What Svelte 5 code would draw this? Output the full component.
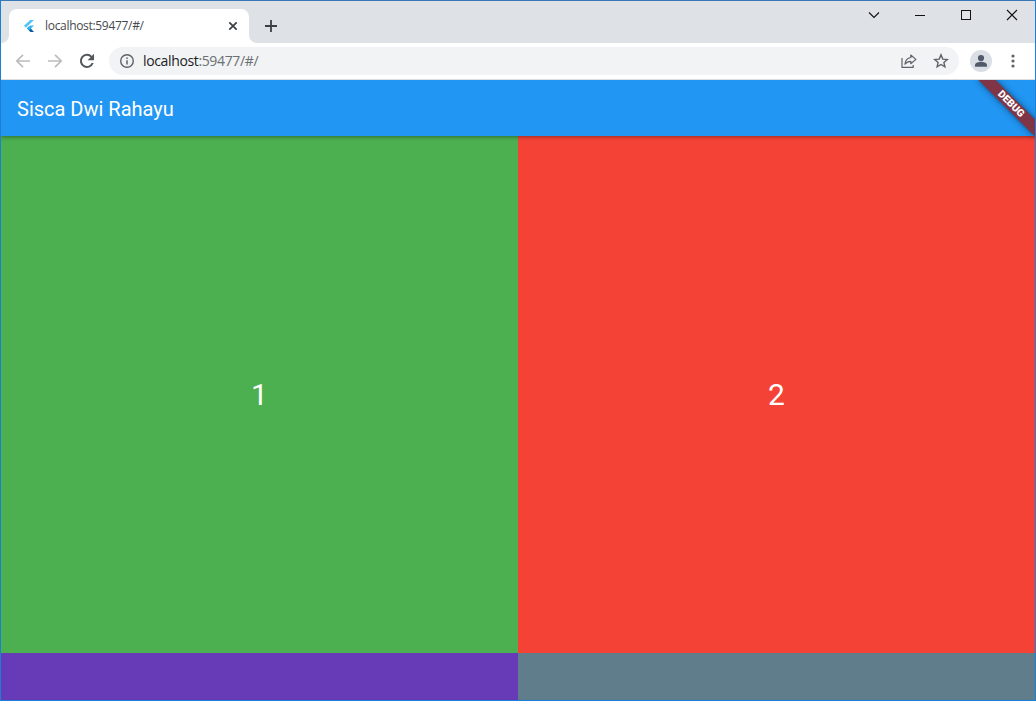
<script>
  const tiles = [
    { label: '1', tone: 'green' },
    { label: '2', tone: 'red' },
    { label: '', tone: 'purple' },
    { label: '', tone: 'slate' }
  ];
</script>

<div class="window">
  <header class="tabs">
    <div class="tab">
      <svg class="logo" width="12" height="14" viewBox="0 0 12 14">
        <path d="M7.2 1H11L2.9 8.7 1 6.8z" fill="#54c5f8" />
        <path d="M7.2 6.5H11L8 9.5 5.9 9.5 4.1 9.5z" fill="#40b8f0" />
        <path d="M4.1 9.5L6 7.6 11 13H7.4z" fill="#075b9d" />
        <path d="M4.1 9.5L6 7.6 8 9.5 6 11.5z" fill="#29b6f6" />
      </svg>
      <span class="tab-title">localhost:59477/#/</span>
      <svg class="close-tab" width="16" height="16" viewBox="0 0 16 16">
        <path d="M4.3 4.3l7.4 7.4M11.7 4.3l-7.4 7.4" stroke="#3c4043" stroke-width="1.7" />
      </svg>
    </div>
    <svg class="plus" width="16" height="16" viewBox="0 0 16 16">
      <path d="M8 2v12M2 8h12" stroke="#3c4043" stroke-width="1.8" />
    </svg>
    <div class="controls">
      <svg width="46" height="28" viewBox="0 0 46 28"><path d="M18 11.5l5 5 5-5" /></svg>
      <svg width="46" height="28" viewBox="0 0 46 28"><path d="M18 14.5h10" shape-rendering="crispEdges" /></svg>
      <svg width="46" height="28" viewBox="0 0 46 28"><path d="M18.5 9.5h9v9h-9z" shape-rendering="crispEdges" /></svg>
      <svg width="46" height="28" viewBox="0 0 46 28"><path d="M18 9l10 10M28 9L18 19" /></svg>
    </div>
  </header>

  <nav class="toolbar">
    <svg class="nav" width="16" height="16" viewBox="0 0 16 16">
      <path d="M15 8H2M8 1.8L1.8 8 8 14.2" fill="none" stroke="#babcbe" stroke-width="1.7" />
    </svg>
    <svg class="nav" width="16" height="16" viewBox="0 0 16 16">
      <path d="M1 8h13M8 1.8L14.2 8 8 14.2" fill="none" stroke="#babcbe" stroke-width="1.7" />
    </svg>
    <svg class="nav" width="16" height="16" viewBox="0 0 16 16">
      <path d="M13.7 10A6.1 6.1 0 1 1 12.5 3.8L14 5.3" fill="none" stroke="#54585d" stroke-width="2" />
      <path d="M15 .8v6.4H8.6z" fill="#54585d" />
    </svg>
    <div class="address">
      <svg width="16" height="16" viewBox="0 0 16 16">
        <circle cx="8" cy="8" r="6.3" fill="none" stroke="#5f6368" stroke-width="1.4" />
        <path d="M8 7.2v4.3M8 4.4v1.7" stroke="#5f6368" stroke-width="1.5" />
      </svg>
      <span class="url"><span class="host">localhost</span>:59477/#/</span>
      <svg class="share" width="16" height="16" viewBox="0 0 16 16" fill="none" stroke="#5f6368" stroke-width="1.2" stroke-linejoin="round">
        <path d="M1 5v9.4h11.2V12" />
        <path d="M9.8 2l5.1 4.4-5.1 4.3V8.3C7 8.3 5.3 9.2 3.9 11.2 4.3 7.4 6.2 5 9.8 4.5z" />
      </svg>
      <svg width="16" height="16" viewBox="0 0 16 16">
        <path d="M8 1.9l1.8 4.2 4.5.4-3.4 3 1 4.4L8 11.5l-3.9 2.4 1-4.4-3.4-3 4.5-.4z" fill="none" stroke="#5f6368" stroke-width="1.4" />
      </svg>
    </div>
    <svg class="avatar" width="22" height="22" viewBox="0 0 22 22">
      <circle cx="11" cy="11" r="11" fill="#dadfe6" />
      <circle cx="11" cy="8" r="3.1" fill="#505a69" />
      <path d="M5 16.7V15c0-2.1 3.9-3.2 6-3.2s6 1.1 6 3.2v1.7z" fill="#505a69" />
    </svg>
    <svg class="more" width="16" height="16" viewBox="0 0 16 16" fill="#5f6368">
      <circle cx="8" cy="3" r="1.6" /><circle cx="8" cy="8" r="1.6" /><circle cx="8" cy="13" r="1.6" />
    </svg>
  </nav>

  <main class="page">
    <div class="appbar"><h1>Sisca Dwi Rahayu</h1></div>
    <div class="grid">
      {#each tiles as tile}
        <div class="tile {tile.tone}">{tile.label}</div>
      {/each}
    </div>
    <div class="banner">DEBUG</div>
  </main>
</div>

<style>
  :global(body) { overflow: hidden; }
  .window {
    box-sizing: border-box;
    width: 1036px;
    height: 701px;
    border: 1px solid #1c7fd6;
    border-top-color: #3a78b5;
    display: flex;
    flex-direction: column;
    overflow: hidden;
    background: #fff;
    font-family: "Open Sans", "Noto Sans", sans-serif;
  }
  svg { display: block; flex: none; }
  .tabs {
    height: 42px;
    flex: none;
    display: flex;
    background: #dee1e6;
  }
  .tab {
    position: relative;
    box-sizing: border-box;
    width: 240px;
    height: 34px;
    margin: 8px 0 0 8px;
    padding: 0 8px 0 14px;
    display: flex;
    align-items: center;
    background: #fff;
    border-radius: 8px 8px 0 0;
  }
  .tab::before, .tab::after {
    content: "";
    position: absolute;
    bottom: 0;
    width: 8px;
    height: 8px;
  }
  .tab::before { left: -8px; background: radial-gradient(circle at 0 0, #dee1e6 7.5px, #fff 8.5px); }
  .tab::after { right: -8px; background: radial-gradient(circle at 100% 0, #dee1e6 7.5px, #fff 8.5px); }
  .tab-title {
    margin-left: 10px;
    font-size: 12px;
    line-height: 16px;
    letter-spacing: -0.31px;
    color: #45494d;
  }
  .close-tab { margin-left: auto; }
  .plus { margin: 17px 0 0 14px; }
  .controls {
    display: flex;
    margin-left: auto;
    fill: none;
    stroke: #111;
    stroke-width: 1.1;
  }
  .toolbar {
    box-sizing: border-box;
    height: 37px;
    flex: none;
    display: flex;
    align-items: center;
    padding: 0 14px;
    border-bottom: 1px solid #dadce0;
  }
  .nav { margin-right: 16px; }
  .address {
    box-sizing: border-box;
    width: 850px;
    height: 28px;
    margin-left: -2px;
    padding: 0 10px;
    display: flex;
    align-items: center;
    border-radius: 14px;
    background: #f1f3f4;
  }
  .url {
    margin-left: 8px;
    font-size: 14px;
    line-height: 20px;
    letter-spacing: -0.36px;
    color: #6b6f73;
  }
  .host { color: #202124; }
  .share { margin: 0 16px 0 auto; }
  .avatar { margin-left: 11px; }
  .more { margin-left: auto; }
  .page {
    position: relative;
    flex: 1;
    min-height: 0;
    display: flex;
    flex-direction: column;
    overflow: hidden;
    font-family: Roboto, sans-serif;
  }
  .appbar {
    position: relative;
    z-index: 1;
    box-sizing: border-box;
    height: 56px;
    flex: none;
    display: flex;
    align-items: center;
    padding: 2px 16px 0;
    background: #2196f3;
    box-shadow: 0 1px 4px #0006;
  }
  h1 {
    margin: 0;
    font-size: 20px;
    font-weight: 400;
    line-height: 24px;
    color: #fff;
  }
  .grid {
    display: grid;
    grid-template-columns: 1fr 1fr;
    grid-auto-rows: 517px;
  }
  .tile {
    display: flex;
    align-items: center;
    justify-content: center;
    font-size: 30px;
    color: #fff;
  }
  .green { background: #4caf50; }
  .red { background: #f44336; }
  .purple { background: #673ab7; }
  .slate { background: #607d8b; }
  .banner {
    position: absolute;
    z-index: 2;
    top: 18px;
    right: -16px;
    width: 80px;
    height: 12px;
    transform: rotate(45deg);
    background: #7f3546;
    box-shadow: 0 0 6px #0008;
    color: #fff;
    font-size: 10.2px;
    font-weight: 900;
    line-height: 12px;
    text-align: center;
  }
</style>
